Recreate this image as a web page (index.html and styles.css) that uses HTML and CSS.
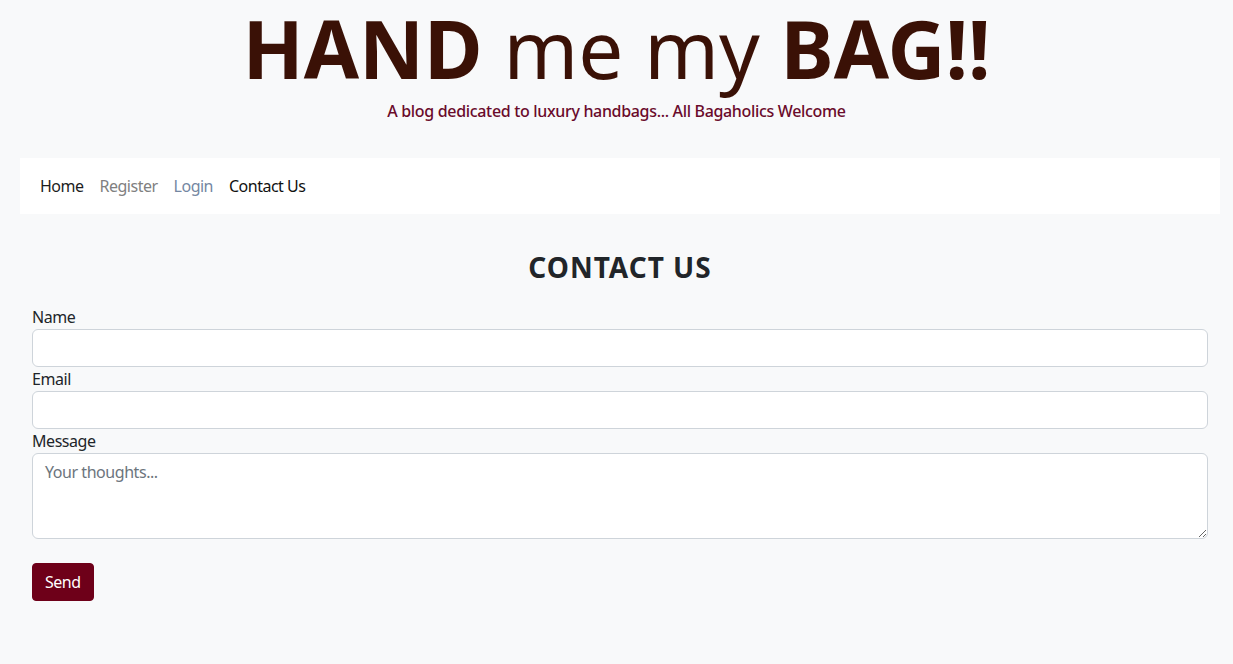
FILE: index.html
```html
<!DOCTYPE html>
<html lang="en">
<head>
<meta charset="utf-8">
<title>HAND me my BAG!!</title>
<link rel="stylesheet" href="styles.css">
</head>
<body>
<header class="masthead">
  <h1 class="site-title"><strong>HAND</strong> me my <strong>BAG!!</strong></h1>
  <p class="tagline">A blog dedicated to luxury handbags... All Bagaholics Welcome</p>
</header>
<nav class="navbar">
  <a class="nav-link nav-home" href="#">Home</a>
  <a class="nav-link nav-register" href="#">Register</a>
  <a class="nav-link nav-login" href="#">Login</a>
  <a class="nav-link nav-active" href="#">Contact Us</a>
</nav>
<main class="content">
  <h3 class="page-title">CONTACT US</h3>
  <form class="contact-form">
    <label class="form-label" for="name">Name</label>
    <input class="form-control" id="name" type="text">
    <label class="form-label" for="email">Email</label>
    <input class="form-control" id="email" type="email">
    <label class="form-label" for="message">Message</label>
    <textarea class="form-control form-textarea" id="message" rows="3" placeholder="Your thoughts..."></textarea>
    <div class="form-actions">
      <button class="btn-send" type="submit">Send</button>
    </div>
  </form>
</main>
</body>
</html>
```

FILE: styles.css
```css
* { box-sizing: border-box; }
html, body {
  margin: 0;
  padding: 0;
}
body {
  background: #f8f9fa;
  font-family: "Noto Sans", "Open Sans", sans-serif;
  font-size: 16px;
  line-height: 1.5;
  letter-spacing: -0.45px;
  color: #212529;
}
.masthead {
  text-align: center;
  padding: 0 0 35px;
}
.site-title {
  margin: 0;
  font-size: 80px;
  line-height: 96px;
  font-weight: 400;
  color: #3a1106;
  letter-spacing: 0;
}
.site-title strong { font-weight: 700; }
.tagline {
  margin: 3px 0 0;
  font-size: 16px;
  line-height: 24px;
  font-weight: 500;
  letter-spacing: -0.33px;
  color: #6a0b2b;
}
.navbar {
  margin: 0 13px 0 20px;
  background: #ffffff;
  display: flex;
  align-items: center;
  height: 56px;
  padding: 0 12px;
}
.nav-link {
  text-decoration: none;
  padding: 8px;
  line-height: 24px;
  letter-spacing: -0.5px;
}
.nav-home { color: #1c1c1c; }
.nav-register { color: #808080; }
.nav-login { color: #7487a2; }
.nav-active { color: #111111; }
.content {
  padding: 36px 25px 0 32px;
}
.page-title {
  margin: 0 0 21px;
  text-align: center;
  font-size: 28px;
  line-height: 34px;
  font-weight: 700;
  letter-spacing: 1px;
  color: #212529;
}
.contact-form {
  display: flex;
  flex-direction: column;
}
.form-label {
  line-height: 24px;
  color: #212529;
}
.form-control {
  display: block;
  width: 100%;
  height: 38px;
  padding: 6px 12px;
  font-family: inherit;
  font-size: 16px;
  line-height: 24px;
  letter-spacing: -0.45px;
  color: #212529;
  background: #ffffff;
  border: 1px solid #ced4da;
  border-radius: 6px;
}
.form-textarea {
  height: 86px;
  resize: vertical;
}
.form-textarea::placeholder { color: #6c757d; }
.form-actions {
  margin-top: 24px;
}
.btn-send {
  font-family: inherit;
  font-size: 16px;
  line-height: 24px;
  letter-spacing: -0.5px;
  padding: 6px 12px;
  background: #6e0019;
  color: #ffffff;
  border: 1px solid #6e0019;
  border-radius: 4px;
}
```
